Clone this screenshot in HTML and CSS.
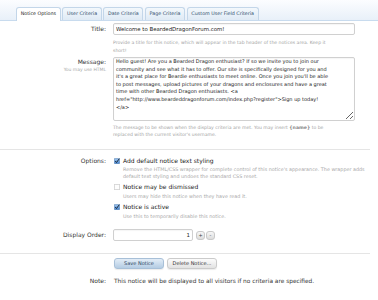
FILE: index.html
```html
<!DOCTYPE html>
<html>
<head>
  <meta charset="UTF-8">
  <title>Notice Options</title>
  <link rel="stylesheet" href="styles.css">
</head>
<body>
  <ul class="tabs">
    <li class="active"><a>Notice Options</a></li>
    <li><a>User Criteria</a></li>
    <li><a>Date Criteria</a></li>
    <li><a>Page Criteria</a></li>
    <li><a>Custom User Field Criteria</a></li>
  </ul>

  <form class="xenForm">
    <dl class="ctrlUnit">
      <dt><label>Title:</label></dt>
      <dd>
        <input type="text" class="textCtrl" value="Welcome to BeardedDragonForum.com!">
        <p class="explain">Provide a title for this notice, which will appear in the tab header of the notices area. Keep it<br>short!</p>
      </dd>
    </dl>

    <dl class="ctrlUnit message">
      <dt><label>Message:</label><span class="dtHint">You may use HTML</span></dt>
      <dd>
        <textarea class="textCtrl">Hello guest! Are you a Bearded Dragon enthusiast? If so we invite you to join our
community and see what it has to offer. Our site is specifically designed for you and
it's a great place for Beardie enthusiasts to meet online. Once you join you'll be able
to post messages, upload pictures of your dragons and enclosures and have a great
time with other Bearded Dragon enthusiasts. &lt;a
href="http://www.beardeddragonforum.com/index.php?register"&gt;Sign up today!
&lt;/a&gt;</textarea>
        <p class="explain">The message to be shown when the display criteria are met. You may insert <b>{name}</b> to be<br>replaced with the current visitor's username.</p>
      </dd>
    </dl>

    <fieldset class="options">
      <dl class="ctrlUnit">
        <dt><label>Options:</label></dt>
        <dd>
          <ul class="checkboxes">
            <li>
              <label>
                <svg class="check" width="6" height="6" viewBox="0 0 12 12"><defs><linearGradient id="cb" x1="0" y1="0" x2="0" y2="1"><stop offset="0" stop-color="#a9ccf0"/><stop offset="1" stop-color="#3f82d2"/></linearGradient></defs><rect x="0.5" y="0.5" width="11" height="11" rx="2" fill="url(#cb)" stroke="#4d74a3"/><path d="M2.5 6.2 L5 9 L10.5 1.5" fill="none" stroke="#1c2733" stroke-width="2"/></svg>
                Add default notice text styling
              </label>
              <p class="hint">Remove the HTML/CSS wrapper for complete control of this notice's appearance. The wrapper adds default text styling and undoes the standard CSS reset.</p>
            </li>
            <li>
              <label>
                <svg class="check" width="6" height="6" viewBox="0 0 12 12"><rect x="0.5" y="0.5" width="11" height="11" rx="2" fill="#fdfdfd" stroke="#9c9c9c"/></svg>
                Notice may be dismissed
              </label>
              <p class="hint">Users may hide this notice when they have read it.</p>
            </li>
            <li>
              <label>
                <svg class="check" width="6" height="6" viewBox="0 0 12 12"><rect x="0.5" y="0.5" width="11" height="11" rx="2" fill="url(#cb)" stroke="#4d74a3"/><path d="M2.5 6.2 L5 9 L10.5 1.5" fill="none" stroke="#1c2733" stroke-width="2"/></svg>
                Notice is active
              </label>
              <p class="hint">Use this to temporarily disable this notice.</p>
            </li>
          </ul>
        </dd>
      </dl>
    </fieldset>

    <dl class="ctrlUnit order">
      <dt><label>Display Order:</label></dt>
      <dd>
        <input type="text" class="textCtrl number" value="1">
        <span class="spin">+</span><span class="spin">-</span>
      </dd>
    </dl>

    <dl class="ctrlUnit submitUnit">
      <dt></dt>
      <dd>
        <input type="button" class="button primary" value="Save Notice">
        <input type="button" class="button" value="Delete Notice...">
      </dd>
    </dl>

    <dl class="ctrlUnit note">
      <dt><label>Note:</label></dt>
      <dd>This notice will be displayed to all visitors if no criteria are specified.</dd>
    </dl>
  </form>
</body>
</html>
```

FILE: styles.css
```css
* { box-sizing: border-box; }
body { margin: 0; background: #fff; font-family: "DejaVu Sans", sans-serif; color: #333; }

/* tabs */
.tabs { display: flex; align-items: flex-end; gap: 1.5px; height: 21px; margin: 0; padding: 7px 0 0 16px; list-style: none; background: linear-gradient(#fcfdff, #e8f0f9); border-bottom: 1px solid #c8dbee; }
.tabs li { height: 13px; padding: 0 3.7px; border: 1px solid #c3d6e9; border-bottom: none; border-radius: 3px 3px 0 0; background: linear-gradient(#f3f8fc, #dfeaf5); font-size: 4.8px; line-height: 12px; color: #2f4d6b; white-space: nowrap; }
.tabs li.active { height: 14px; margin-bottom: -1px; background: #fff; color: #222; }

/* form */
.xenForm { width: 370px; padding-top: 2px; }
.ctrlUnit { display: flex; margin: 0; }
.ctrlUnit dt { width: 107px; padding-right: 1px; text-align: right; font-size: 6px; line-height: 12px; color: #333; }
.ctrlUnit dd { flex: 1; margin: 0 0 0 6px; }
.textCtrl { display: block; width: 242px; height: 12px; margin: 0; padding: 0 2px; border: 1px solid #d0d0d0; border-radius: 2px; background: #fff; box-shadow: inset 0 1px 1px rgba(0,0,0,.04); font: 5.4px "DejaVu Sans", sans-serif; color: #222; }
.explain { margin: 3.5px 0 0; font-size: 4.6px; line-height: 8.5px; color: #a3a3a3; }
.explain b { color: #888; }

.message { margin-top: 1.5px; }
.message dt { line-height: 9px; }
.dtHint { display: block; font-size: 4.5px; line-height: 7px; color: #a8a8a8; }
.message textarea { height: 64px; padding: 0 2px; font-size: 5px; line-height: 7.6px; resize: vertical; }
.message .explain { margin-top: 2.5px; line-height: 7.7px; }

.options { margin: 10px 0 0; padding: 7px 0 0; border: none; border-top: 1px solid #e5e5e5; }
.options dt { line-height: 8px; }
.checkboxes { margin: 0; padding: 0; list-style: none; }
.checkboxes li + li { margin-top: 4px; }
.checkboxes label { display: flex; align-items: center; margin-left: 1px; font-size: 6px; line-height: 8px; color: #222; }
.check { flex: none; margin-right: 3px; }
.hint { margin: 1.5px 0 0 10px; font-size: 4.85px; line-height: 6.4px; color: #a8a8a8; }

.order { margin-top: 10px; }
.order dd { display: flex; align-items: center; }
.number { width: 80px; text-align: right; }
.spin { width: 9px; height: 9px; margin-left: 1px; border: 1px solid #c9c9c9; border-radius: 3px; background: linear-gradient(#f7f7f7, #dcdcdc); font-size: 5px; line-height: 7px; text-align: center; color: #444; }
.spin:first-of-type { margin-left: 3px; }

.submitUnit { margin-top: 11.5px; padding-top: 4px; border-top: 1px solid #e5e5e5; }
.submitUnit dd { display: flex; gap: 3px; padding-left: 1px; }
.button { width: 50px; height: 11px; padding: 0; border: 1px solid #cbcbcb; border-radius: 3px; background: linear-gradient(#fcfcfc, #e2e2e2); box-shadow: 0 1px 1px rgba(0,0,0,.08); font: 5px "DejaVu Sans", sans-serif; color: #333; }
.button.primary { border-color: #a8c0d8; background: linear-gradient(#e3edf7, #b4cce3); color: #2c4661; }

.note { margin-top: 8.3px; }
.note dt, .note dd { font-size: 6px; line-height: 8px; color: #333; }
.note dd { padding-left: 1px; font-size: 5.85px; }
```
